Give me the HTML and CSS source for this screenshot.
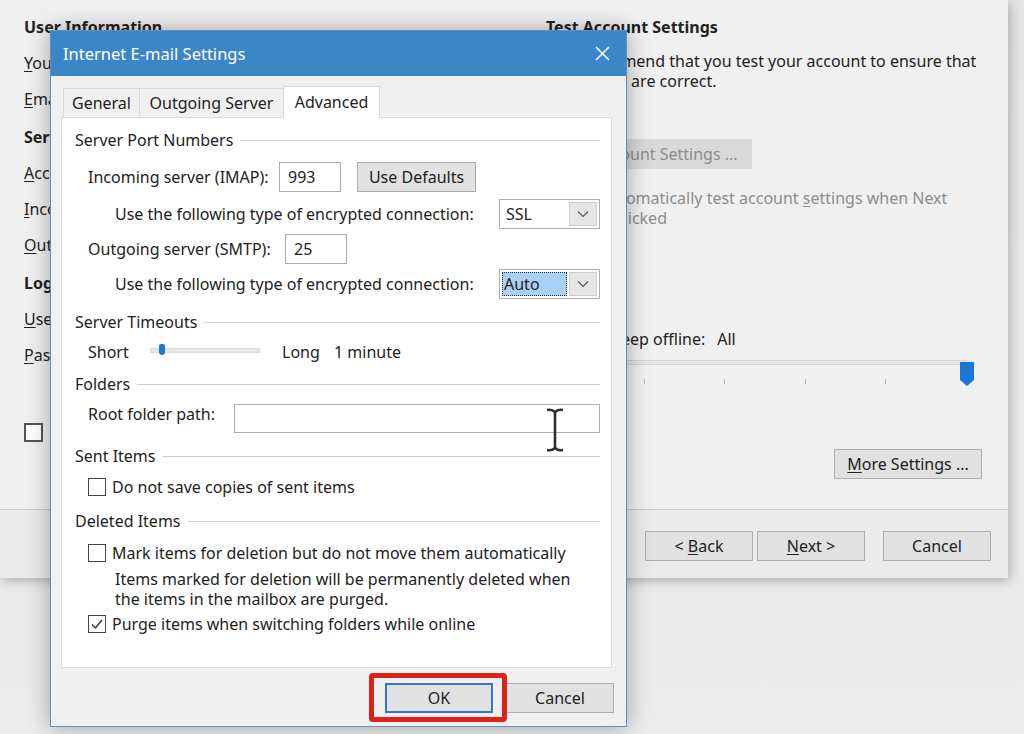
FILE: index.html
```html
<!DOCTYPE html>
<html lang="en">

<head>
    <meta charset="UTF-8">
    <meta name="viewport" content="width=device-width, initial-scale=1.0">
    <title>Internet E-mail Settings</title>
    <link rel="stylesheet" href="styles.css">
</head>

<body>
    <div class="desktop">
        <!-- the Add Account wizard behind -->
        <div class="wizard">
            <div class="wiz-body">
                <div class="col-left">
                    <div class="row head first">User Information</div>
                    <div class="row"><u>Y</u>our Name:</div>
                    <div class="row"><u>E</u>mail Address:</div>
                    <div class="row head">Server Information</div>
                    <div class="row"><u>A</u>ccount Type:</div>
                    <div class="row"><u>I</u>ncoming mail server:</div>
                    <div class="row"><u>O</u>utgoing mail server (SMTP):</div>
                    <div class="row head">Logon Information</div>
                    <div class="row"><u>U</u>ser Name:</div>
                    <div class="row"><u>P</u>assword:</div>
                    <div class="spa"><span class="box big"></span>Require logon using Secure Password Authentication (SPA)</div>
                </div>
                <div class="col-right">
                    <div class="row head first">Test Account Settings</div>
                    <div class="desc">We recommend that you test your account to ensure that<br>the entries are correct.</div>
                    <div class="btn disabled test">Test Account Settings ...</div>
                    <div class="autotest"><span class="box faint"></span><span>Automatically test account <u>s</u>ettings when Next<br>is clicked</span></div>
                    <div class="offline">Mail to keep offline:<span class="all">All</span></div>
                    <div class="bigslider">
                        <div class="bigtrack"></div>
                        <svg class="bigthumb" width="14" height="24" viewBox="0 0 14 24"><path d="M0 0 H14 V18 L7 24 L0 18 Z" fill="#1c77d4"/></svg>
                        <div class="ticks"><i></i><i></i><i></i><i></i><i></i><i></i></div>
                    </div>
                    <div class="btn more"><u>M</u>ore Settings ...</div>
                </div>
            </div>
            <div class="wiz-foot">
                <div class="btn wbtn">&lt; <u>B</u>ack</div>
                <div class="btn wbtn"><u>N</u>ext &gt;</div>
                <div class="btn wbtn cancel">Cancel</div>
            </div>
        </div>

        <!-- the dialog on top -->
        <div class="dialog">
            <div class="titlebar">
                <span>Internet E-mail Settings</span>
                <svg width="15" height="15" viewBox="0 0 15 15"><path d="M1 1 L14 14 M14 1 L1 14" stroke="#fff" stroke-width="1.6" fill="none"/></svg>
            </div>
            <div class="dlg-body">
                <div class="tabs">
                    <div class="tab t1">General</div>
                    <div class="tab t2">Outgoing Server</div>
                    <div class="tab t3 active">Advanced</div>
                </div>
                <div class="panel">
                    <div class="legend first"><span>Server Port Numbers</span><i></i></div>
                    <div class="frow in1">
                        <span class="lbl l-in">Incoming server (IMAP):</span>
                        <span class="input port">993</span>
                        <span class="btn defaults">Use Defaults</span>
                    </div>
                    <div class="frow sub use1">
                        <span class="lbl l-use">Use the following type of encrypted connection:</span>
                        <span class="select"><span class="val">SSL</span><span class="arrow"><svg width="12" height="8" viewBox="0 0 12 8"><path d="M1 1.5 L6 6.5 L11 1.5" stroke="#555" stroke-width="1.2" fill="none"/></svg></span></span>
                    </div>
                    <div class="frow out1">
                        <span class="lbl l-out">Outgoing server (SMTP):</span>
                        <span class="input port">25</span>
                    </div>
                    <div class="frow sub use2">
                        <span class="lbl l-use">Use the following type of encrypted connection:</span>
                        <span class="select"><span class="val sel">Auto</span><span class="arrow"><svg width="12" height="8" viewBox="0 0 12 8"><path d="M1 1.5 L6 6.5 L11 1.5" stroke="#555" stroke-width="1.2" fill="none"/></svg></span></span>
                    </div>

                    <div class="legend timeouts"><span>Server Timeouts</span><i></i></div>
                    <div class="frow short">
                        <span class="lbl l-short">Short</span>
                        <span class="track"><span class="knob"></span></span>
                        <span class="lbl l-long">Long</span>
                        <span>1 minute</span>
                    </div>

                    <div class="legend folders"><span>Folders</span><i></i></div>
                    <div class="frow root">
                        <span class="lbl l-root">Root folder path:</span>
                        <span class="input path"></span>
                    </div>

                    <div class="legend sent"><span>Sent Items</span><i></i></div>
                    <div class="check c1"><span class="box"></span>Do not save copies of sent items</div>

                    <div class="legend deleted"><span>Deleted Items</span><i></i></div>
                    <div class="check c2"><span class="box"></span>Mark items for deletion but do not move them automatically</div>
                    <div class="note">Items marked for deletion will be permanently deleted when<br>the items in the mailbox are purged.</div>
                    <div class="check c3"><span class="box"><svg width="14" height="14" viewBox="0 0 14 14"><path d="M2 7.5 L5.5 11 L12 3" stroke="#333" stroke-width="1.4" fill="none"/></svg></span>Purge items when switching folders while online</div>
                </div>
                <div class="dlg-foot">
                    <div class="btn dbtn ok">OK</div>
                    <div class="btn dbtn">Cancel</div>
                </div>
            </div>

            <div class="highlight"></div>
            <svg class="ibeam" width="20" height="46" viewBox="0 0 20 46">
                <path d="M2 3 Q7 2 10 5 Q13 2 18 3 M10 5 V41 M2 43 Q7 44 10 41 Q13 44 18 43" stroke="#2e2e2e" stroke-width="2.6" fill="none"/>
            </svg>
        </div>
    </div>
</body>

</html>
```

FILE: styles.css
```css
* {
    box-sizing: border-box;
}

body {
    margin: 0;
    font-family: "Noto Sans", "Liberation Sans", sans-serif;
    font-size: 16px;
    color: #222;
}

u {
    text-decoration: underline;
    text-underline-offset: 2px;
}

.desktop {
    position: relative;
    width: 1024px;
    height: 734px;
    overflow: hidden;
    background: linear-gradient(#e4e4e4, #ececec);
}

/* ---------- wizard behind ---------- */

.wizard {
    width: 1008px;
    height: 578px;
    background: #f0f0f0;
    display: flex;
    flex-direction: column;
    box-shadow: 2px 3px 10px rgba(0, 0, 0, .25);
}

.wiz-body {
    flex: 1;
    display: grid;
    grid-template-columns: 522px 438px;
    padding: 0 24px;
}

.col-left,
.col-right {
    padding-top: 9px;
}

.row {
    height: 36px;
    line-height: 36px;
    white-space: nowrap;
}

.head {
    font-weight: bold;
    margin-top: 2px;
}

.head.first {
    margin-top: 0;
}

.spa {
    margin-top: 48px;
    display: flex;
    align-items: center;
    gap: 10px;
    white-space: nowrap;
}

.box {
    width: 18px;
    height: 18px;
    border: 1px solid #444;
    background: #fff;
    display: inline-flex;
    align-items: center;
    justify-content: center;
    flex: none;
}

.box.big {
    width: 19px;
    height: 19px;
    border: 2px solid #555;
}

.desc {
    margin-top: 6px;
    line-height: 20px;
    white-space: nowrap;
}

.btn {
    height: 30px;
    line-height: 28px;
    background: #e1e1e1;
    border: 1px solid #adadad;
    text-align: center;
    white-space: nowrap;
}

.btn.disabled {
    background: #d9d9d9;
    border-color: #d9d9d9;
    color: #8c8c8c;
}

.test {
    width: 206px;
    margin-top: 48px;
}

.autotest {
    margin-top: 19px;
    display: flex;
    gap: 8px;
    padding-left: 28px;
    line-height: 20px;
    color: #8c8c8c;
    white-space: nowrap;
}

.box.faint {
    border-color: #bbb;
    margin-top: 1px;
}

.offline {
    margin-top: 101px;
    line-height: 20px;
    padding-left: 11px;
}

.all {
    margin-left: 12px;
}

.bigslider {
    position: relative;
    margin: 3px 0 0 10px;
    width: 418px;
    height: 36px;
}

.bigtrack {
    margin: 11px 7px 0;
    height: 5px;
    background: #e7e7e7;
    border: 1px solid #d4d4d4;
}

.bigthumb {
    position: absolute;
    right: 0;
    top: 2px;
}

.ticks {
    display: flex;
    justify-content: space-between;
    padding: 0 7px;
    margin-top: 14px;
}

.ticks i {
    width: 1px;
    height: 5px;
    background: #bbb;
}

.more {
    width: 148px;
    margin: 53px 2px 0 auto;
}

.wiz-foot {
    height: 69px;
    border-top: 1px solid #c9c9c9;
    background: #ebebeb;
    display: flex;
    justify-content: flex-end;
    padding: 21px 17px 0 0;
    gap: 4px;
}

.wbtn {
    width: 108px;
}

.wbtn.cancel {
    margin-left: 14px;
}

/* ---------- dialog ---------- */

.dialog {
    position: absolute;
    left: 50px;
    top: 30px;
    width: 577px;
    height: 697px;
    background: #f0f0f0;
    border: 1px solid #5a90c2;
    box-shadow: 0 0 22px rgba(0, 0, 0, .33);
    display: flex;
    flex-direction: column;
}

.titlebar {
    height: 45px;
    background: #3a86c6;
    color: #fff;
    font-size: 16.5px;
    display: flex;
    align-items: center;
    justify-content: space-between;
    padding: 0 16px 0 12px;
}

.dlg-body {
    flex: 1;
    padding: 10px 14px 0 10px;
}

.tabs {
    display: flex;
    align-items: flex-end;
    height: 31px;
    padding-left: 2px;
}

.tab {
    height: 29px;
    line-height: 29px;
    text-align: center;
    border: 1px solid #d9d9d9;
    border-bottom: none;
    background: #f0f0f0;
    white-space: nowrap;
}

.tab+.tab {
    margin-left: -1px;
}

.t1 {
    width: 77px;
}

.t2 {
    width: 145px;
}

.t3 {
    width: 97px;
}

.tab.active {
    height: 32px;
    line-height: 31px;
    background: #fff;
    margin-bottom: -1px;
    position: relative;
}

.panel {
    height: 551px;
    background: #fff;
    border: 1px solid #d9d9d9;
    padding: 12px 11px 0 13px;
}

.legend {
    display: flex;
    align-items: center;
    height: 20px;
    line-height: 20px;
    white-space: nowrap;
}

.legend i {
    flex: 1;
    height: 1px;
    background: #d0d0d0;
    margin-left: 7px;
}

.timeouts {
    margin-top: 13px;
}

.folders {
    margin-top: 12px;
}

.sent {
    margin-top: 12px;
}

.deleted {
    margin-top: 14px;
}

.frow {
    display: flex;
    align-items: center;
    height: 30px;
    padding-left: 13px;
    white-space: nowrap;
}

.frow.sub {
    padding-left: 40px;
}

.in1 {
    margin-top: 12px;
}

.use1 {
    margin-top: 7px;
}

.out1,
.use2 {
    margin-top: 5px;
}

.lbl {
    flex: none;
}

.l-in {
    width: 191px;
}

.l-out {
    width: 197px;
}

.l-use {
    width: 384px;
}

.input {
    height: 30px;
    line-height: 28px;
    border: 1px solid #adadad;
    background: #fff;
    padding-left: 8px;
}

.port {
    width: 62px;
}

.defaults {
    width: 119px;
    margin-left: 16px;
}

.select {
    display: flex;
    width: 102px;
    height: 30px;
    border: 1px solid #adadad;
    padding: 2px;
}

.val {
    flex: 1;
    line-height: 24px;
    padding-left: 4px;
}

.val.sel {
    background: #a9d1f5;
    outline: 1px dotted #333;
    outline-offset: -1px;
    margin-right: 2px;
    padding-left: 2px;
}

.arrow {
    width: 28px;
    background: #e6e6e6;
    border: 1px solid #cfcfcf;
    display: flex;
    align-items: center;
    justify-content: center;
}

.short {
    margin-top: 10px;
    height: 20px;
}

.l-short {
    width: 62px;
}

.track {
    position: relative;
    width: 110px;
    height: 5px;
    background: #e6e6e6;
    border: 1px solid #dcdcdc;
    margin-top: -4px;
}

.knob {
    position: absolute;
    left: 8px;
    top: -5px;
    width: 6px;
    height: 11px;
    border-radius: 2px 2px 3px 3px;
    background: #1c77d4;
}

.l-long {
    width: 52px;
    margin-left: 22px;
}

.root {
    margin-top: 10px;
    align-items: flex-start;
}

.l-root {
    width: 146px;
    line-height: 20px;
}

.path {
    width: 367px;
    height: 29px;
}

.check {
    display: flex;
    align-items: center;
    gap: 6px;
    height: 20px;
    padding-left: 13px;
    white-space: nowrap;
}

.c1 {
    margin-top: 11px;
}

.c2 {
    margin-top: 12px;
}

.c3 {
    margin-top: 5px;
}

.note {
    margin-top: 6px;
    padding-left: 40px;
    line-height: 20px;
    white-space: nowrap;
}

.dlg-foot {
    display: flex;
    justify-content: flex-end;
    gap: 13px;
    margin: 15px -2px 0 0;
}

.dbtn {
    width: 108px;
}

.dbtn.ok {
    border: 2px solid #2f78cc;
    line-height: 26px;
}

.highlight {
    position: absolute;
    left: 318px;
    top: 642px;
    width: 138px;
    height: 49px;
    border: 5px solid #dd2219;
    border-radius: 4px;
}

.ibeam {
    position: absolute;
    left: 494px;
    top: 376px;
}
```
